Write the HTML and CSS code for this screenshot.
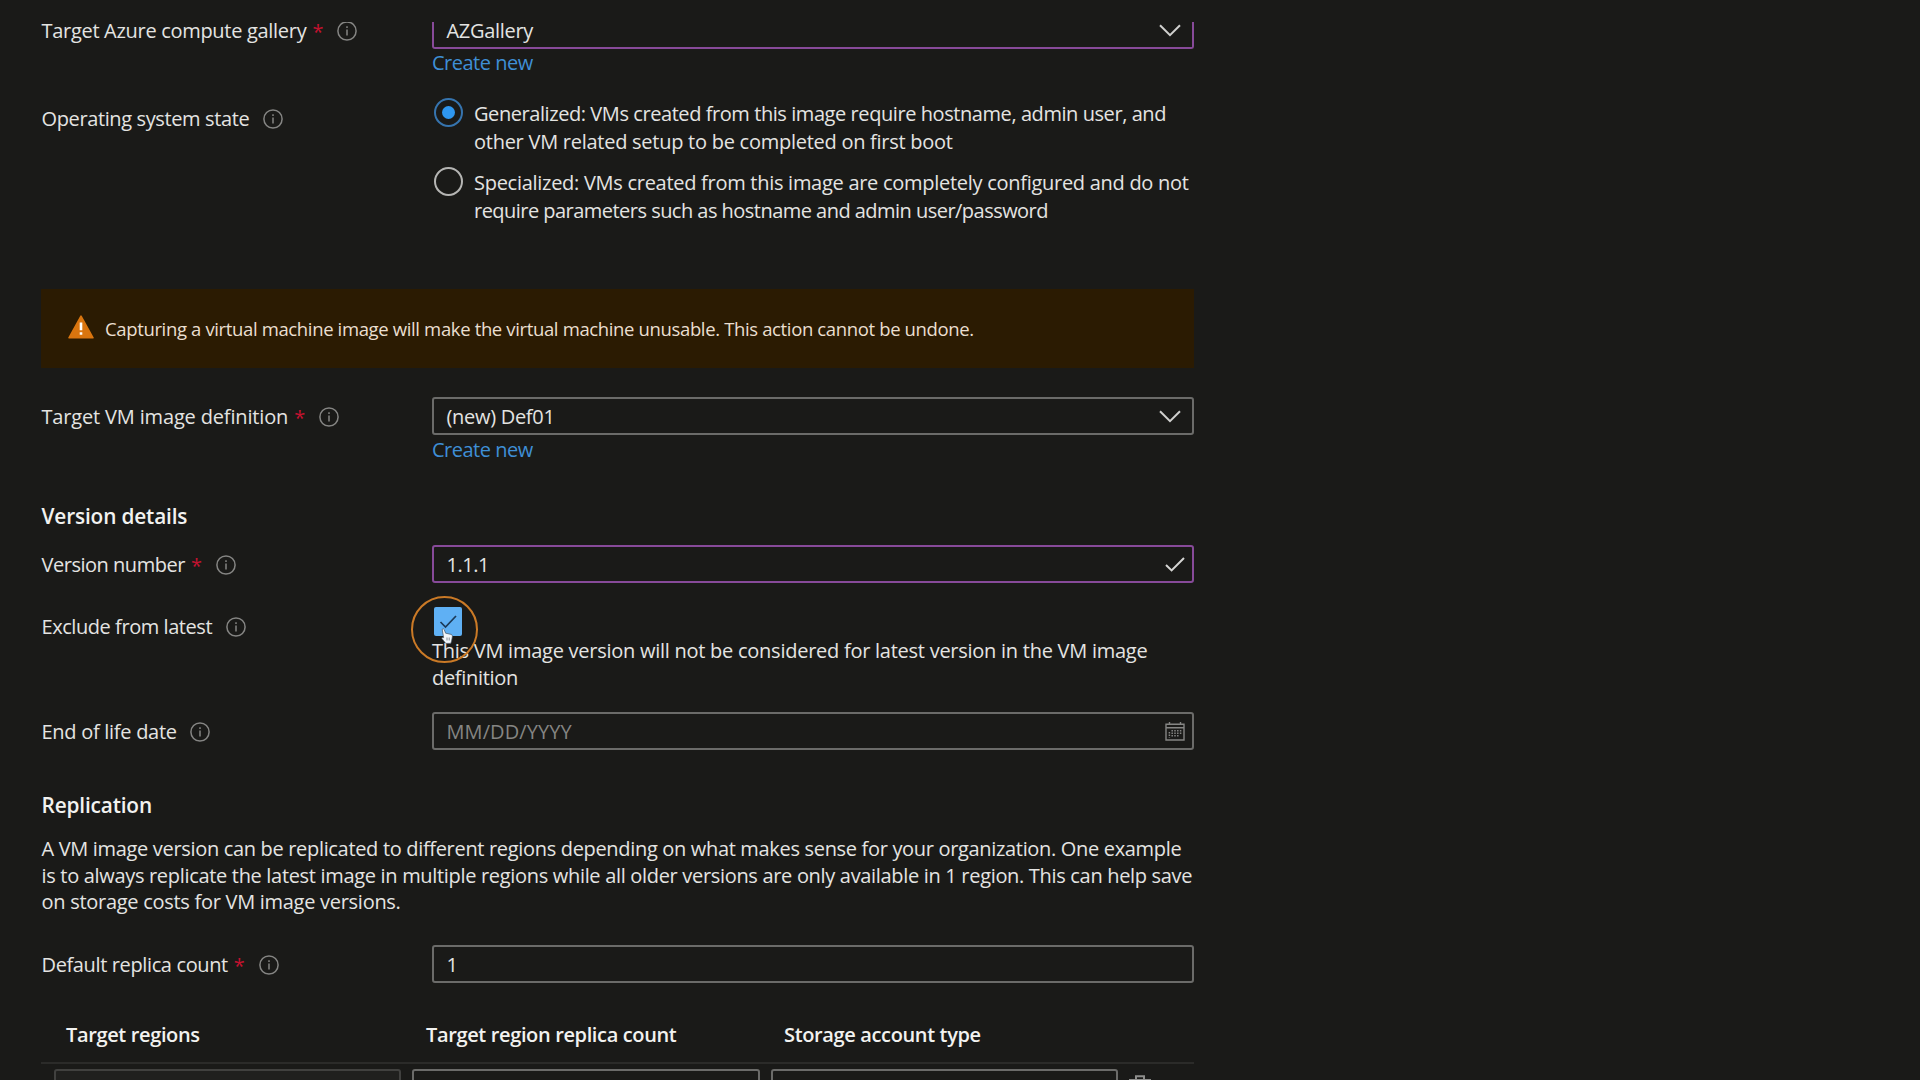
FILE: index.html
```html
<!DOCTYPE html>
<html lang="en">
<head>
<meta charset="utf-8">
<title>Create an image</title>
<link rel="stylesheet" href="styles.css">
</head>
<body>
<svg class="defs" width="0" height="0">
  <symbol id="info" viewBox="0 0 20 20"><circle cx="10" cy="10" r="9.1" fill="none" stroke="currentColor" stroke-width="1.5"/><path d="M10 8.6V14.6M10 5.2V7" stroke="currentColor" stroke-width="1.5"/></symbol>
  <symbol id="chevron" viewBox="0 0 22 13"><path d="M1 1.2 11 11.2 21 1.2" fill="none" stroke="currentColor" stroke-width="2"/></symbol>
</svg>
<main class="blade">
  <form class="form">
    <div class="row row-gallery">
      <div class="label"><span class="t-gallery">Target Azure compute gallery</span><span class="req">*</span><svg class="info"><use href="#info"/></svg></div>
      <div>
        <div class="field field-edited field-cut"><span>AZGallery</span><svg class="chevron"><use href="#chevron"/></svg></div>
        <a class="link">Create new</a>
      </div>
    </div>

    <div class="row row-os">
      <div class="label"><span class="t-os">Operating system state</span><svg class="info"><use href="#info"/></svg></div>
      <div class="options">
        <div class="option">
          <span class="radio radio-on"></span>
          <p><span class="t-gen1">Generalized: VMs created from this image require hostname, admin user, and</span><br><span class="t-gen2">other VM related setup to be completed on first boot</span></p>
        </div>
        <div class="option">
          <span class="radio"></span>
          <p><span class="t-spec1">Specialized: VMs created from this image are completely configured and do not</span><br><span class="t-spec2">require parameters such as hostname and admin user/password</span></p>
        </div>
      </div>
    </div>

    <div class="banner">
      <svg class="warn" viewBox="0 0 26 24"><path d="M13 1.2 25 22.8H1Z" fill="#d9750f" stroke="#d9750f" stroke-width="1.6" stroke-linejoin="round"/><path d="M13 7.6V15.2M13 17.2V19.8" stroke="#fff" stroke-width="2.6"/></svg>
      <span>Capturing a virtual machine image will make the virtual machine unusable. This action cannot be undone.</span>
    </div>

    <div class="row row-def">
      <div class="label"><span class="t-def">Target VM image definition</span><span class="req">*</span><svg class="info"><use href="#info"/></svg></div>
      <div>
        <div class="field"><span>(new) Def01</span><svg class="chevron"><use href="#chevron"/></svg></div>
        <a class="link">Create new</a>
      </div>
    </div>

    <h2 class="heading heading-version">Version details</h2>

    <div class="row row-version">
      <div class="label"><span class="t-ver">Version number</span><span class="req">*</span><svg class="info"><use href="#info"/></svg></div>
      <div class="field field-edited"><span class="t-num">1.1.1</span><svg class="tick" viewBox="0 0 20 15"><path d="M1 8 6.6 13.4 19 1" fill="none" stroke="currentColor" stroke-width="2"/></svg></div>
    </div>

    <div class="row row-exclude">
      <div class="label"><span class="t-excl">Exclude from latest</span><svg class="info"><use href="#info"/></svg></div>
      <div class="exclude">
        <span class="checkbox"><svg viewBox="0 0 28 29"><path d="M6.5 15 11.5 20 22 9" fill="none" stroke="#1c3a58" stroke-width="1.7"/></svg></span>
        <p><span class="t-note">This VM image version will not be considered for latest version in the VM image</span><br>definition</p>
        <span class="pointer-ring"></span>
        <svg class="pointer" viewBox="0 0 12 16"><path d="M1.2 1.3Q2.4.2 3.2 1.6L4.6 5.2 10.2 6.4Q11.6 7 11.4 8.6L10.6 13 9.8 15.4H4.8L.8 10.4Q.6 9 2.6 9.6Z" fill="#f2f6fa" stroke="#44525f" stroke-width=".7"/><path d="M6 9.5V12.5M8.2 9.5V12.5" stroke="#66727c" stroke-width=".8"/></svg>
      </div>
    </div>

    <div class="row row-eol">
      <div class="label"><span class="t-eol">End of life date</span><svg class="info"><use href="#info"/></svg></div>
      <div class="field"><span class="placeholder">MM/DD/YYYY</span><svg class="calendar" viewBox="0 0 20 19" fill="none" stroke="currentColor"><path d="M1 2.2H19V18H1ZM1 5.8H19M4.5 0V3M15.5 0V3" stroke-width="1.4"/><path d="M4.4 10V15.5M7.2 8V15.5M10 8V15.5M12.8 8V15.5M15.6 8V13" stroke-width="1.5" stroke-dasharray="1.5 1"/></svg></div>
    </div>

    <h2 class="heading heading-replication">Replication</h2>
    <p class="about"><span class="t-p1">A VM image version can be replicated to different regions depending on what makes sense for your organization. One example</span><br><span class="t-p2">is to always replicate the latest image in multiple regions while all older versions are only available in 1 region. This can help save</span><br><span class="t-p3">on storage costs for VM image versions.</span></p>

    <div class="row row-replica">
      <div class="label"><span class="t-rep">Default replica count</span><span class="req">*</span><svg class="info"><use href="#info"/></svg></div>
      <div class="field"><span>1</span></div>
    </div>

    <div class="table">
      <div class="thead"><span>Target regions</span><span>Target region replica count</span><span>Storage account type</span></div>
      <div class="tbody">
        <div class="cell cell-disabled"></div>
        <div class="cell"></div>
        <div class="cell"></div>
        <svg class="trash" viewBox="0 0 22 26" fill="none" stroke="#8d8d8b" stroke-width="2"><path d="M0 5H22M7 5V1.2H15V5M3 5V25H19V5"/></svg>
      </div>
    </div>
  </form>
</main>
</body>
</html>
```

FILE: styles.css
```css
* { box-sizing: border-box; }

body {
  margin: 0;
  height: 1080px;
  padding-top: 22px;
  overflow: hidden;
  background: #1a1a18;
  color: #e4e4e2;
  font-family: "Open Sans", "Noto Sans", sans-serif;
  font-size: 20px;
  line-height: 28px;
  letter-spacing: -0.3px;
  white-space: nowrap;
}

p, h2 { margin: 0; }
.defs { display: block; }

/* scrolled viewport: content above it is cut off */
.blade { height: 1058px; overflow: hidden; }
.form { margin-left: 41px; width: 1153px; }

.row { display: grid; grid-template-columns: 391px 762px; align-items: start; }
.row-gallery { height: 77px; }
.row-os { height: 190px; }
.row-def { height: 105px; }
.row-version { height: 61px; }
.row-exclude { height: 106px; }
.row-eol { height: 79px; }
.row-replica { height: 75px; }

.label { display: flex; align-items: center; padding: 6px 0 0 0.5px; }
.row-exclude .label { padding-top: 7px; }
.req { align-self: flex-start; width: 10px; margin-left: 6px; padding-top: 2px; line-height: 26px; color: #c4122f; }
.info { width: 20px; height: 20px; margin: -1px 0 0 13.5px; color: #858583; }
.req + .info { margin-left: 15px; }

.row-gallery .label { height: 18px; padding-top: 0; line-height: 18px; }
.row-gallery .req { padding-top: 2px; line-height: 16px; }

.field {
  display: flex;
  align-items: center;
  justify-content: space-between;
  height: 38px;
  padding: 0 7px 0 12.5px;
  border: 2px solid #6b6b69;
  border-radius: 3px;
}
.field span { padding-top: 1px; }
.field-edited { border-color: #874a99; }
.field-cut {
  align-items: flex-start;
  height: 27px;
  border-top: 0;
  border-radius: 0 0 3px 3px;
  line-height: 16px;
}
.field-cut .chevron { margin-top: 2px; }
.chevron { width: 22px; height: 13px; margin-right: 4px; color: #d0d0ce; }
.tick { width: 20px; height: 15px; color: #d6d6d4; }
.calendar { width: 20px; height: 19px; color: #858583; }
.placeholder { color: #858583; letter-spacing: 0.1px; }
.link { display: block; padding-top: 1px; line-height: 26px; color: #3f8fd6; letter-spacing: -0.5px; }
.row-def .link { padding-top: 2px; }

.options { display: grid; gap: 13px; }
.option { display: flex; align-items: flex-start; gap: 11px; padding-left: 2px; }
.option p { position: relative; top: 1px; }
.radio {
  display: grid;
  place-items: center;
  width: 29px;
  height: 29px;
  margin-top: -1px;
  border: 2px solid #b5b5b3;
  border-radius: 50%;
}
.radio-on { border-color: #3674ae; }
.radio-on::after { content: ""; width: 13px; height: 13px; border-radius: 50%; background: #2e96ee; }

.banner {
  display: flex;
  align-items: center;
  gap: 11px;
  height: 79px;
  margin-bottom: 29px;
  padding-left: 27px;
  background: #2b1b02;
  color: #eadfd0;
  font-size: 18.5px;
  letter-spacing: -0.36px;
}
.warn { width: 26px; height: 24px; margin-top: -3px; }

.heading { padding-left: 0.5px; font-size: 20.8px; font-weight: 600; line-height: 28px; letter-spacing: -0.15px; color: #f2f2f0; }
.heading-version { height: 43px; }
.heading-replication { height: 45px; }
.about { height: 109px; padding-left: 0.5px; line-height: 26.67px; }

.exclude { position: relative; line-height: 26.67px; }
.checkbox { display: block; width: 28px; height: 29px; margin: 1px 0 2px 2px; border-radius: 2px; background: #5fb0f4; }
.checkbox svg { display: block; }
.pointer-ring {
  position: absolute;
  left: -21px;
  top: -10px;
  width: 67px;
  height: 67px;
  border: 2.5px solid #cb7a26;
  border-radius: 50%;
}
.pointer { position: absolute; left: 9px; top: 22px; width: 12px; height: 16px; }

.thead {
  display: grid;
  grid-template-columns: 360px 358px 1fr;
  height: 44px;
  padding: 1px 0 0 25px;
  border-bottom: 2px solid #2b2b29;
  font-weight: 600;
  letter-spacing: -0.36px;
  color: #f2f2f0;
}
.tbody { display: flex; gap: 11px; padding: 5px 0 0 12.5px; }
.cell { width: 347.5px; height: 38px; border: 2px solid #6b6b69; border-radius: 3px; }
.cell-disabled { border-color: #41413f; background: #20201e; }
.trash { width: 22px; height: 26px; margin-top: 6px; }

/* tracking of single lines */
.t-gallery { letter-spacing: -0.3px; }
.t-os { letter-spacing: -0.38px; }
.t-gen1 { letter-spacing: -0.43px; }
.t-gen2 { letter-spacing: -0.26px; }
.t-spec1 { letter-spacing: -0.28px; }
.t-spec2 { letter-spacing: -0.53px; }
.t-def { letter-spacing: -0.16px; }
.t-ver { letter-spacing: -0.48px; }
.t-excl { letter-spacing: -0.44px; }
.t-eol { letter-spacing: -0.28px; }
.t-rep { letter-spacing: -0.37px; }
.t-num { letter-spacing: -0.5px; }
.t-note { letter-spacing: -0.256px; }
.t-p1 { letter-spacing: -0.325px; }
.t-p2 { letter-spacing: -0.318px; }
.t-p3 { letter-spacing: -0.28px; }
```
